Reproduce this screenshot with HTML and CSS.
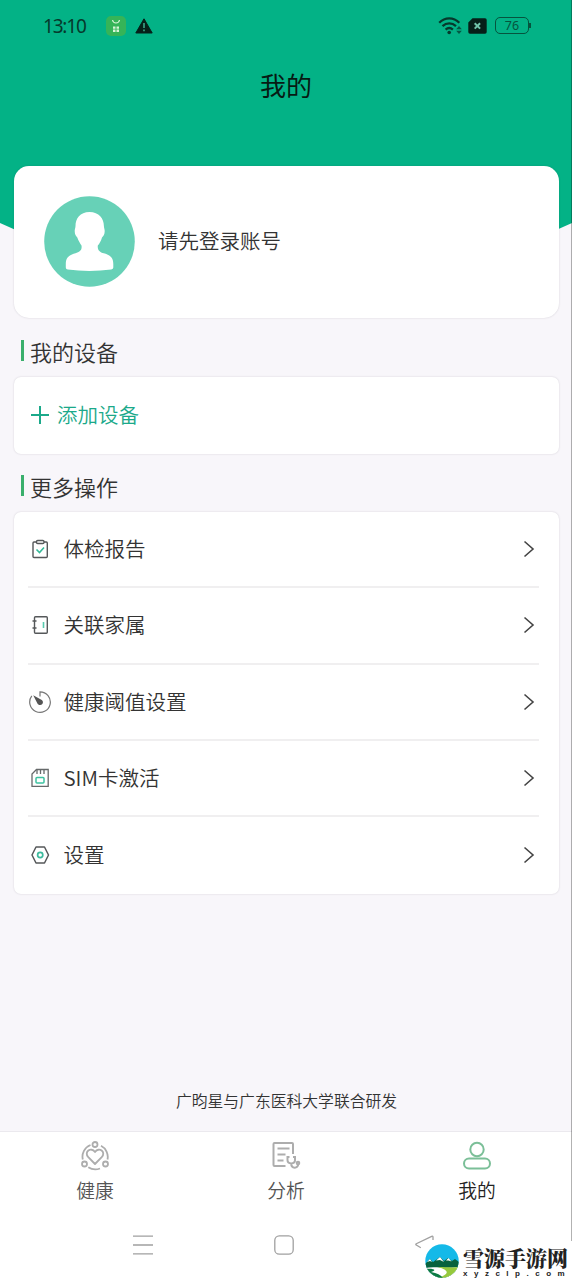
FILE: index.html
```html
<!DOCTYPE html>
<html lang="zh-CN">
<head>
<meta charset="utf-8">
<title>我的</title>
<link rel="stylesheet" href="styles.css">
</head>
<body>
<div class="phone">
  <header class="hero">
    <div class="status">
      <span class="clock">13:10</span>
      <svg class="app-badge" width="20" height="20" viewBox="0 0 20 20"><rect width="20" height="20" rx="5" fill="#35b458"/><path d="M6.500 4c.8 4 6.200 4 7 0" fill="none" stroke="#d8f5d8" stroke-width="1.200"/><path d="M7 10.500h2.500v2.200H7zM10.500 10.500H13v2.200h-2.500zM7 13.500h2.500v2.500H7zM10.500 13.500H13V16h-2.500z" fill="#d8f5d8"/></svg>
      <svg class="warn" width="18" height="16" viewBox="0 0 18 16"><path d="M9 .8 17.200 15H.8z" fill="#06211a" stroke="#06211a" stroke-linejoin="round"/><path d="M9 5v5M9 11.500v1.700" stroke="#39a98b" stroke-width="1.600"/></svg>
      <svg class="wifi" width="25" height="20" viewBox="0 0 25 20"><g fill="none" stroke="#06392c" stroke-width="2.300"><path d="M1.200 6.800C7 1 15.500 1 21.300 6.800"/><path d="M4.500 10.200c4-3.700 9.500-3.700 13.500 0"/><path d="M7.600 13.600c2.200-2 5.100-2 7.300 0"/></g><circle cx="11.200" cy="16.500" r="1.800" fill="#06392c"/><path d="m21 10 2.800 3.200h-5.600zM21 18l2.800-3.200h-5.600z" fill="#06392c" opacity=".75"/></svg>
      <svg class="sim" width="19" height="16" viewBox="0 0 19 16"><path d="M4.500.3H17q1.700 0 1.700 1.700v12q0 1.700-1.700 1.700H2Q.3 15.700.3 14V4.500z" fill="#061f18"/><path d="m6.700 5.200 5.400 5.400m0-5.400-5.400 5.400" stroke="#70c3a9" stroke-width="2"/></svg>
      <span class="battery">76</span>
    </div>
    <h1 class="title">我的</h1>
  </header>

  <main class="content">
    <section class="card profile">
      <svg class="avatar" width="91" height="91" viewBox="0 0 91 91"><circle cx="45.500" cy="45.500" r="45.300" fill="#67d1b7"/><path d="M45 16C35.500 16 31 22.500 31 30c0 2-.8 3-.8 5 0 3.500 1.200 5 2.600 6.500 1.200 3.500 3 6 4.200 8 .8 5-2 6.500-6 7.800C24.500 59 21.300 61.500 21.300 68v3.500q0 1.800 2 2c14 1.900 29 1.900 43.500 0q2-.3 2-2V68c0-6.500-3.200-9-9.500-10.700-4-1.300-6.500-3-6-7.800 1.700-2 3.200-4.500 4.200-8 1.500-1.500 2.700-3 2.700-6.500 0-2-.8-3-.8-5C59.400 22.500 54.500 16 45 16z" transform="translate(.5)" fill="#fff"/></svg>
      <span class="login">请先登录账号</span>
    </section>

    <h2 class="section-title">我的设备</h2>
    <section class="card add">
      <svg width="18" height="18" viewBox="0 0 18 18"><path d="M9 0v18M0 9h18" stroke="#1ba98a" stroke-width="2"/></svg>
      <span class="add-label">添加设备</span>
    </section>

    <h2 class="section-title">更多操作</h2>
    <section class="card menu">
      <div class="row">
        <svg class="icon" width="24" height="24" viewBox="0 0 24 24" fill="none" stroke="#55585a" stroke-width="1.400"><rect x="5" y="5" width="14.300" height="15.500" rx="1"/><rect x="8.500" y="3.500" width="7.500" height="3" rx="1.200" fill="#fff"/><path d="m8.500 12.500 3 3 4.500-5" stroke="#35b998" stroke-width="1.600"/></svg>
        <span class="label">体检报告</span>
        <svg class="chevron" width="12" height="18" viewBox="0 0 12 18"><path d="m1.500 1.500 8.500 7.500-8.500 7.500" /></svg>
      </div>
      <div class="row">
        <svg class="icon" width="24" height="24" viewBox="0 0 24 24" fill="none" stroke="#55585a" stroke-width="1.400"><rect x="6.500" y="3.700" width="12.800" height="16.600" rx="1"/><path d="M4.500 8h4M4.500 15h4"/><path d="M15.500 9v6" stroke="#58cbb0" stroke-width="1.600"/></svg>
        <span class="label">关联家属</span>
        <svg class="chevron" width="12" height="18" viewBox="0 0 12 18"><path d="m1.500 1.500 8.500 7.500-8.500 7.500" /></svg>
      </div>
      <div class="row">
        <svg class="icon" width="24" height="24" viewBox="0 0 24 24"><path d="M12 6.500V1.800A10.300 10.300 0 1 1 3.800 5.900" fill="none" stroke="#777" stroke-width="1.200"/><path d="m5.200 5.300 8.600 4.700c2.200 1.700 1 5-1.500 5-1.600 0-2.500-.8-3-1.800z" fill="#555"/></svg>
        <span class="label">健康阈值设置</span>
        <svg class="chevron" width="12" height="18" viewBox="0 0 12 18"><path d="m1.500 1.500 8.500 7.500-8.500 7.500" /></svg>
      </div>
      <div class="row">
        <svg class="icon" width="24" height="24" viewBox="0 0 24 24" fill="none" stroke="#66696a" stroke-width="1.300"><path d="M8.500 3.500h11.700V20.300H4V8z"/><path d="M9 4v4M12.500 4v4M16 4v4"/><rect x="8" y="11.500" width="8" height="5.500" rx="1" stroke="#3dc2a1" stroke-width="1.500"/></svg>
        <span class="label">SIM卡激活</span>
        <svg class="chevron" width="12" height="18" viewBox="0 0 12 18"><path d="m1.500 1.500 8.500 7.500-8.500 7.500" /></svg>
      </div>
      <div class="row">
        <svg class="icon" width="24" height="24" viewBox="0 0 24 24" fill="none" stroke="#55585a" stroke-width="1.500" stroke-linejoin="round"><path d="M8 4h8.500l4 8-4 8H8l-4-8z"/><circle cx="12.200" cy="12" r="2.600" stroke="#3dbb9e" stroke-width="1.700"/></svg>
        <span class="label">设置</span>
        <svg class="chevron" width="12" height="18" viewBox="0 0 12 18"><path d="m1.500 1.500 8.500 7.500-8.500 7.500" /></svg>
      </div>
    </section>
    <p class="credit">广昀星与广东医科大学联合研发</p>
  </main>

  <nav class="tabs">
    <div class="tab">
      <svg width="30" height="30" viewBox="0 0 30 30" fill="none" stroke="#adadad" stroke-width="1.800"><path d="M15 23 8.300 16.200C3.500 11 11 5.500 15 11c4-5.500 11.500 0 6.700 5.200z" stroke-linejoin="round"/><circle cx="15" cy="3.500" r="2.500"/><circle cx="4.500" cy="23" r="2.500"/><circle cx="25.500" cy="23" r="2.500"/><path d="M10.500 4A12.500 12.500 0 0 0 2.800 18.500M21 4.800A12.500 12.500 0 0 1 27.500 18.500M8.300 26.300A13 13 0 0 0 20 27.500"/></svg>
      <span>健康</span>
    </div>
    <div class="tab">
      <svg width="30" height="30" viewBox="0 0 30 30" fill="none" stroke="#adadad" stroke-width="2"><path d="M14.500 25H3.500q-1 0-1-1V3q0-1 1-1H21q1 0 1 1v10M6.500 7.500h12M6.500 13.500h8M6.500 19.500h6"/><path d="M18.500 16h-2v3c0 4.500 7.500 4.500 7.500 0v-3h-2M20.200 22.500c0 5.500 7 5.500 7 .5"/><circle cx="27" cy="22" r="1.300"/></svg>
      <span>分析</span>
    </div>
    <div class="tab active">
      <svg width="30" height="30" viewBox="0 0 30 30" fill="none" stroke="#7bbf98" stroke-width="2"><circle cx="15" cy="8.500" r="6.700"/><rect x="2" y="17.500" width="26" height="10" rx="5"/></svg>
      <span>我的</span>
    </div>
  </nav>

  <div class="system-nav">
    <svg width="20" height="20" viewBox="0 0 20 20"><path d="M0 1.200h20M0 10h20M0 18.800h20"/></svg>
    <svg width="20" height="20" viewBox="0 0 20 20"><rect x=".8" y=".8" width="18.400" height="18.400" rx="4.500"/></svg>
    <svg width="20" height="20" viewBox="0 0 20 20"><path d="M18 5V2.200q0-1.400-1.300-.8L1.300 8.700q-1 .7 0 1.300l4.500 2.800"/></svg>
  </div>

  <div class="edge"></div>
  <div class="watermark">
    <svg width="34" height="34" viewBox="0 0 34 34"><defs><clipPath id="disc"><circle cx="17" cy="17" r="16.700"/></clipPath></defs><g clip-path="url(#disc)"><path d="M0 0h34v34H0z" fill="#14b9e8"/><path d="m0 20 5-5 3 3 7-5 4 4 4-3 4 3 3-2 4 3v16H0z" fill="#07623d"/><path d="m2 18 3-3 2 3-2-1zM11 16.500l4-3.500 4 5-4-2zM21 16.500l2.500-2.500 3 3.500-3-1z" fill="#fff"/><path d="M0 24c10-2 20 1 34-1v11H0z" fill="#fff"/><path d="M13 23c8 0 14 1 21 0v11H13c9-3 14-7 0-11z" fill="#96c93d"/><path d="M0 25c8-1 13 1 6 3 6 1 10 3 12 6H0z" fill="#0b7a43"/></g></svg>
    <div class="brand"><span class="brand-name">雪源手游网</span><span class="brand-url">xyzclp.com</span></div>
  </div>
</div>
</body>
</html>
```
FILE: styles.css
```css
* { box-sizing: border-box; }

body {
  margin: 0;
  font-family: "Noto Sans CJK SC", sans-serif;
  font-weight: 350;
  color: #333;
}

.phone {
  position: relative;
  width: 572px;
  height: 1280px;
  overflow: hidden;
  background: #f8f6fa;
  display: flex;
  flex-direction: column;
}

svg { display: block; flex: none; }

.hero {
  height: 290px;
  flex: none;
  background: #03b286;
  clip-path: polygon(0 0, 100% 0, 100% 223px, 50% 350px, 0 223px);
}

.status {
  height: 51px;
  padding: 0 43px 0 43px;
  display: flex;
  align-items: center;
}

.clock {
  width: 63px;
  font: 400 19px "Noto Sans", sans-serif;
  letter-spacing: -1.200px;
  color: #06392c;
}

.warn { margin-left: 9px; }
.wifi { margin-left: auto; }
.sim { margin: 0 8px 0 5px; }

.battery {
  position: relative;
  width: 34px;
  height: 17px;
  border: 1.500px solid #06543e;
  border-radius: 5px;
  font: 400 12.500px/15px "Noto Sans", sans-serif;
  text-align: center;
  color: #06543e;
}

.battery::after {
  content: "";
  position: absolute;
  right: -3px;
  top: 5px;
  width: 2px;
  height: 5px;
  background: #06543e;
}

.title {
  margin: 14px 0 0;
  font-size: 26px;
  line-height: 40px;
  font-weight: 400;
  text-align: center;
  color: #071a14;
}

.content {
  flex: none;
  height: 965px;
  margin-top: -124px;
  padding: 0 13px 0 14px;
  position: relative;
}

.card {
  background: #fff;
  border-radius: 7px;
  box-shadow: 0 0 2px rgba(60, 50, 70, 0.200);
}

.profile {
  height: 152px;
  border-radius: 15px;
  padding: 0 0 2px 30px;
  display: flex;
  align-items: center;
  gap: 23px;
}

.login {
  padding-bottom: 3px;
  font-size: 20.500px;
  line-height: 30px;
}

.section-title {
  margin: 0;
  height: 58px;
  padding: 8px 0 0 7px;
  display: flex;
  align-items: center;
  gap: 6px;
  font-size: 22px;
  line-height: 30px;
  font-weight: 350;
}

.section-title::before {
  content: "";
  width: 3px;
  height: 21px;
  margin-bottom: 2px;
  background: #3aaf6c;
}

.add {
  height: 77px;
  margin-top: 1px;
  margin-bottom: -1px;
  padding: 0 0 1px 17px;
  display: flex;
  align-items: center;
  gap: 8px;
  font-size: 20.500px;
  color: #1ba98a;
}

.add-label { padding-bottom: 2px; }

.menu {
  height: 382px;
  margin-top: 1px;
  padding: 0 20px 0 14px;
}

.row {
  height: 76.300px;
  padding-right: 4px;
  display: flex;
  align-items: center;
  border-bottom: 2px solid #f0eff0;
}

.row:last-child { border-bottom: 0; }

.label {
  flex: 1;
  margin-left: 11.500px;
  padding-bottom: 2px;
  font-size: 20.500px;
  line-height: 30px;
}

.chevron {
  fill: none;
  stroke: #444;
  stroke-width: 1.600px;
}

.credit {
  margin: 196px 0 0;
  text-align: center;
  font-size: 15.800px;
  line-height: 22px;
}

.tabs {
  flex: none;
  height: 79px;
  border-top: 1px solid #ebe9ee;
  background: #fff;
  display: grid;
  grid-template-columns: 190px 192px 190px;
}

.tab {
  display: flex;
  flex-direction: column;
  align-items: center;
  padding-top: 9px;
  gap: 5px;
  font-size: 18.800px;
  line-height: 28px;
  color: #555;
}

.active { color: #222; }

.system-nav {
  flex: 1;
  padding: 0 137px 0 133px;
  background: #fff;
  display: flex;
  justify-content: space-between;
  align-items: center;
}

.system-nav svg {
  fill: none;
  stroke: #a0a0a0;
  stroke-width: 1.300px;
}

.edge {
  position: absolute;
  right: 0;
  top: 0;
  width: 1px;
  height: 1241px;
  background: rgba(0, 0, 0, 0.300);
}

.watermark {
  position: absolute;
  left: 425px;
  top: 1244px;
  display: flex;
  gap: 4px;
}

.brand {
  width: 106px;
  display: flex;
  flex-direction: column;
  color: #222;
}

.brand-name {
  height: 26px;
  font-family: "Noto Serif CJK SC", "Noto Sans CJK SC", serif;
  font-size: 21px;
  line-height: 26px;
  font-weight: 900;
  white-space: nowrap;
}

.brand-url {
  font: 700 8px/8px "Liberation Sans", sans-serif;
  letter-spacing: 6.500px;
  white-space: nowrap;
}
```
